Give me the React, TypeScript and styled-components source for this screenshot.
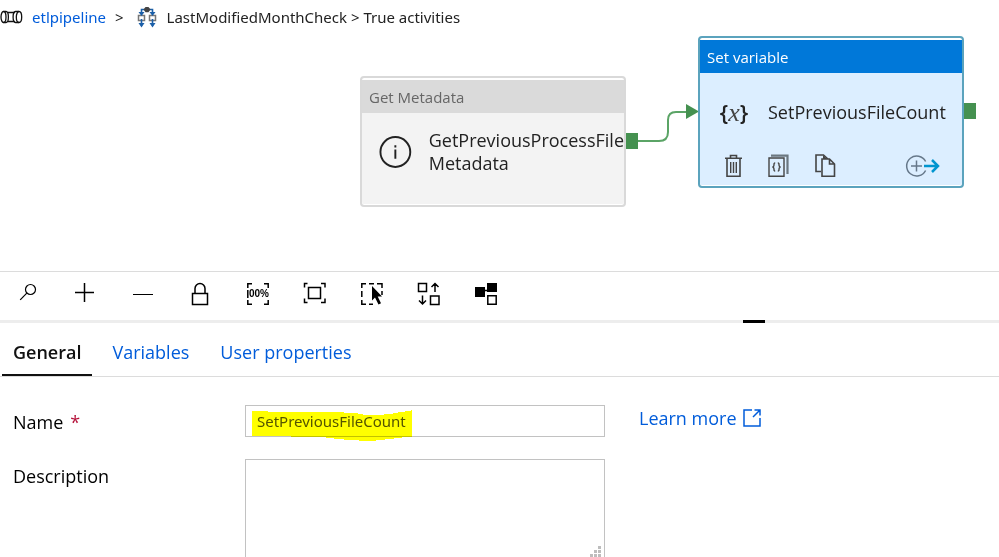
import React from "react";
import styled, { createGlobalStyle } from "styled-components";

const GlobalStyle = createGlobalStyle`
  * { box-sizing: border-box; }
  body {
    margin: 0;
    background: #fff;
    color: #111;
    font-family: "Open Sans", "Noto Sans", sans-serif;
    overflow: hidden;
  }
  button, input, textarea { font: inherit; color: inherit; }
`;

const Page = styled.div`
  display: flex;
  flex-direction: column;
  height: 100vh;
  overflow: hidden;
`;

const Breadcrumb = styled.nav`
  display: flex;
  align-items: center;
  height: 36px;
  padding-bottom: 2px;
  flex: none;
  font-family: "Noto Sans", "Open Sans", sans-serif;
  font-size: 15px;
  line-height: 20px;
  color: #222;
  white-space: nowrap;
`;

const CrumbLink = styled.a`
  margin: 0 9px;
  color: #015cda;
  text-decoration: none;
`;

const CrumbText = styled.span`
  margin-left: 10px;
`;

const Separator = styled.span`
  margin-right: 13px;
`;

const Canvas = styled.section`
  position: relative;
  flex: none;
  height: 235px;
`;

const Wire = styled.svg`
  position: absolute;
  left: 637px;
  top: 66px;
`;

const Node = styled.article<{ $x: number; $y: number; $selected?: boolean }>`
  position: absolute;
  left: ${(p) => p.$x}px;
  top: ${(p) => p.$y}px;
  display: flex;
  flex-direction: column;
  width: 266px;
  height: ${(p) => (p.$selected ? 152 : 131)}px;
  padding-top: 2px;
  border: 2px solid ${(p) => (p.$selected ? "#5ba3bd" : "#d9d9d9")};
  border-radius: 4px;
  background: ${(p) => (p.$selected ? "#dceeff" : "#f3f3f3")};
  box-shadow: inset 0 2px #fff, inset 0 -1px #fff;
`;

const NodeHeader = styled.header<{ $selected?: boolean }>`
  flex: none;
  height: 33px;
  padding: 0 7px;
  font-size: 15px;
  line-height: 34px;
  color: ${(p) => (p.$selected ? "#fff" : "#666")};
  background: ${(p) => (p.$selected ? "#0078d9" : "#dadada")};
`;

const NodeBody = styled.div`
  display: flex;
  flex: none;
  align-items: center;
  gap: 17px;
  height: 78px;
  padding-left: 17px;
  color: #222;
`;

const NodeName = styled.h2`
  margin: 0;
  font-size: 18px;
  line-height: 23px;
  font-weight: 400;
  white-space: nowrap;
`;

const Port = styled.span<{ $y: number }>`
  position: absolute;
  right: -14px;
  top: ${(p) => p.$y}px;
  width: 12px;
  height: 16px;
  background: #459150;
`;

const NodeActions = styled.div`
  display: flex;
  align-items: center;
  gap: 24px;
  padding: 3px 22px 0 24px;
`;

const IconButton = styled.button<{ $end?: boolean }>`
  display: flex;
  flex: none;
  padding: 0;
  border: 0;
  background: none;
  color: #444;
  cursor: pointer;
  margin-left: ${(p) => (p.$end ? "auto" : "0")};
`;

const Toolbar = styled.div`
  display: flex;
  flex: none;
  height: 49px;
  border-top: 1px solid #dcdcdc;
`;

const ToolButton = styled.button`
  display: flex;
  align-items: center;
  justify-content: center;
  width: 57px;
  padding: 0 0 3px;
  border: 0;
  background: none;
  color: #000;
  cursor: pointer;
`;

const Splitter = styled.div`
  display: flex;
  flex: none;
  justify-content: flex-end;
  height: 3px;
  padding-right: 234px;
  background: #ededed;
`;

const SplitterHandle = styled.span`
  width: 22px;
  background: #000;
`;

const Tabs = styled.div`
  display: flex;
  flex: none;
  gap: 9px;
  height: 54px;
  padding-left: 2px;
  border-bottom: 1px solid #dcdcdc;
`;

const Tab = styled.button<{ $active?: boolean }>`
  padding: 7px 11px 0;
  border: 0;
  border-bottom: 2px solid ${(p) => (p.$active ? "#111" : "transparent")};
  background: none;
  font-size: 18px;
  line-height: 24px;
  font-weight: ${(p) => (p.$active ? 600 : 400)};
  color: ${(p) => (p.$active ? "#111" : "#015cda")};
  cursor: pointer;
`;

const Form = styled.form`
  display: grid;
  grid-template-columns: 232px minmax(200px, 360px) auto;
  justify-content: start;
  align-items: start;
  row-gap: 22px;
  padding: 28px 13px 0;
  font-size: 18px;
  line-height: 24px;
`;

const Label = styled.label`
  padding-top: 5px;
  color: #000;
`;

const Required = styled.span`
  margin-left: 7px;
  color: #b5123a;
`;

const Field = styled.div`
  position: relative;
  display: flex;
`;

const TextInput = styled.input`
  width: 100%;
  height: 32px;
  padding: 0 11px;
  border: 1px solid #c2c2c2;
  border-radius: 0;
  font-family: "Noto Sans", "Open Sans", sans-serif;
  font-size: 15px;
  color: #555;
  outline: none;
`;

const TextArea = styled.textarea`
  width: 100%;
  height: 102px;
  padding: 8px 11px;
  border: 1px solid #c2c2c2;
  font-size: 15px;
  resize: none;
  outline: none;
`;

const Marker = styled.svg`
  position: absolute;
  left: 7px;
  top: 5px;
  mix-blend-mode: multiply;
  pointer-events: none;
`;

const Grip = styled.svg`
  position: absolute;
  right: 4px;
  bottom: 4px;
  pointer-events: none;
`;

const LearnMore = styled.a`
  display: flex;
  align-items: center;
  gap: 6px;
  margin-left: 34px;
  padding-top: 1px;
  color: #015cda;
  text-decoration: none;
  white-space: nowrap;
`;

const PipelineIcon = () => (
  <svg width="23" height="16" viewBox="0 0 23 16" fill="none" stroke="#111" strokeWidth="1.3" aria-hidden="true">
    <ellipse cx="3.500" cy="8" rx="2.500" ry="5.500" />
    <path d="M3.500 2.500h2.500c3.200 0 3.200 11 0 11H3.500" />
    <path d="M8 3.500h7M8 12.500h7" />
    <path d="M19 2.500h-3.500c-3.200 0-3.200 11 0 11H19" />
    <ellipse cx="19" cy="8" rx="2.700" ry="5.500" />
  </svg>
);

const ConditionIcon = () => (
  <svg width="20" height="22" viewBox="0 0 20 22" fill="none" aria-hidden="true">
    <path d="M1.500 9.500h6v5h-6zM12.500 9.500h6v5h-6z" fill="#fff" stroke="#777" strokeWidth="1.500" />
    <path d="M4.500 7V3.500h11V7M4.500 13v5M15.500 13v5" stroke="#1b5fa8" strokeWidth="1.600" />
    <path d="M1.500 6h6l-3 4zM12.500 6h6l-3 4zM1.500 17h6l-3 4.500zM12.500 17h6l-3 4.500z" fill="#1b5fa8" />
    <path d="M8.500 1h3L13.500 3.500 11.500 6.200h-3L6.500 3.500z" fill="#444" />
  </svg>
);

const InfoIcon = () => (
  <svg width="34" height="34" viewBox="0 0 34 34" fill="none" stroke="#222" strokeWidth="2" aria-hidden="true">
    <circle cx="17" cy="17" r="15.500" />
    <path d="M17 14.500v9.500M17 10v2.400" />
  </svg>
);

const VariableMark = styled.span`
  flex: none;
  width: 34px;
  text-align: center;
  white-space: nowrap;
  font-size: 22px;
  line-height: 24px;
  font-weight: 600;
  color: #222;

  i {
    font-family: "Liberation Serif", serif;
    font-size: 26px;
    font-weight: 400;
    color: #444;
  }
`;

const TrashIcon = () => (
  <svg width="20" height="24" viewBox="0 0 20 24" fill="none" stroke="currentColor" strokeWidth="1.600" aria-hidden="true">
    <path d="M1 4.200h17M6.500 4V1.500h6V4M3 4.500v17.800h13V4.500" />
    <path d="M6.700 8v11M9.500 8v11M12.300 8v11" strokeWidth="1.400" />
  </svg>
);

const CodeIcon = () => (
  <svg width="23" height="24" viewBox="0 0 23 24" fill="none" stroke="currentColor" strokeWidth="1.400" aria-hidden="true">
    <path d="M1 4h15v18.300H1z" />
    <path d="M3 1.700h16.500V20" strokeWidth="2.200" stroke="#6b7780" />
    <path d="M7.200 9c-1.400 0-1.200 1-1.200 2s-.6 1.800-1.500 2c.9.200 1.500 1 1.500 2s-.2 2 1.200 2M9.800 9c1.400 0 1.200 1 1.200 2s.6 1.800 1.500 2c-.9.200-1.500 1-1.500 2s.2 2-1.200 2" />
  </svg>
);

const CopyIcon = () => (
  <svg width="23" height="24" viewBox="0 0 23 24" fill="none" stroke="currentColor" strokeWidth="1.600" aria-hidden="true">
    <path d="M6 17.500H1V1h7.500L13 5" />
    <path d="M7 5h7.500l5 5v12.300H7zM14.500 5v5h5" fill="#dceeff" />
    <path d="M8 1v4h4z" fill="currentColor" stroke="none" />
  </svg>
);

const AddOutputIcon = () => (
  <svg width="35" height="24" viewBox="0 0 35 24" fill="none" aria-hidden="true">
    <path d="M20.600 7.500a10 10 0 1 0 0 9M11.500 6.500v11M6 12h11" stroke="#66788a" strokeWidth="1.500" />
    <path d="M19 12h14M27 6l6 6-6 6" stroke="#0095cf" strokeWidth="2.500" />
  </svg>
);

type ToolProps = { children: React.ReactNode };
const ToolSvg = ({ children }: ToolProps) => (
  <svg width="25" height="25" viewBox="0 0 25 25" fill="none" stroke="currentColor" strokeWidth="1.500" aria-hidden="true">
    {children}
  </svg>
);

const tools: { label: string; icon: React.ReactNode }[] = [
  {
    label: "Search",
    icon: (
      <g strokeWidth="1.200">
        <circle cx="14.500" cy="7.500" r="5" />
        <path d="M10.800 11.200L4.200 17.800" />
      </g>
    ),
  },
  { label: "Zoom in", icon: <path d="M2 10.500h19M11.500 1v19" /> },
  { label: "Zoom out", icon: <path d="M3 12.500h20" strokeWidth="1" /> },
  {
    label: "Lock canvas",
    icon: <path d="M5.500 11.500h15v11h-15zM8 11.500V6.500a5 5 0 0 1 10 0v5" />,
  },
  {
    label: "Zoom to 100%",
    icon: (
      <>
        <path d="M3.800 6V1.800H8M20 1.800h4.200V6M3.800 18v4.200H8M20 22.200h4.200V18M3.800 8v8" />
        <text x="5" y="15" fontFamily="Liberation Sans, sans-serif" fontSize="10" fontWeight="700" fill="currentColor" stroke="none">
          00%
        </text>
      </>
    ),
  },
  {
    label: "Zoom to fit",
    icon: <path d="M3.500 5.500v-4h3M20 1.500h4v4M3.500 16.500v4h3M20 20.500h4v-4M7.500 5.500h12v11h-12z" />,
  },
  {
    label: "Select",
    icon: (
      <>
        <path d="M3.800 6V1.800H8M11 1.800h5M19 1.800h5V6M3.800 9v6M3.800 18v4.200H8M11 22.200h4M24 9v4" />
        <path d="M14 4v14.500l3-3 3.500 7 2.500-1.300-3.300-6.700H24z" fill="currentColor" stroke="none" />
      </>
    ),
  },
  {
    label: "Auto align",
    icon: (
      <path d="M3.500 1.500h8v8h-8zM15.500 14h8.500v8.500h-8.500zM20 10V1.800M16.500 5L20 1.500 23.500 5M7.500 13.500v8.500M4 18.500L7.500 22l3.500-3.500" />
    ),
  },
  {
    label: "Show lineage",
    icon: (
      <>
        <path d="M3 5h10v10H3zM15 1h10v9H15z" fill="currentColor" stroke="none" />
        <path d="M12 8.500h5M15.800 13.800h8.400v8.400h-8.400z" />
      </>
    ),
  },
];

export default function App() {
  return (
    <>
      <GlobalStyle />
      <Page>
        <Breadcrumb aria-label="Breadcrumb">
          <PipelineIcon />
          <CrumbLink href="#etlpipeline">etlpipeline</CrumbLink>
          <Separator>&gt;</Separator>
          <ConditionIcon />
          <CrumbText>LastModifiedMonthCheck &gt; True activities</CrumbText>
        </Breadcrumb>

        <Canvas aria-label="Pipeline canvas">
          <Wire width="62" height="50" viewBox="0 0 62 50" fill="none" aria-hidden="true">
            <path d="M0 39h22q9 0 9-9V18q0-8 8-8h12" stroke="#5ba466" strokeWidth="2" />
            <path d="M49 2l13 7.500L49 17z" fill="#459150" />
          </Wire>
          <Node $x={360} $y={40}>
            <NodeHeader>Get Metadata</NodeHeader>
            <NodeBody>
              <InfoIcon />
              <NodeName>
                GetPreviousProcessFile
                <br />
                Metadata
              </NodeName>
            </NodeBody>
            <Port $y={55} />
          </Node>
          <Node $x={698} $y={0} $selected>
            <NodeHeader $selected>Set variable</NodeHeader>
            <NodeBody>
              <VariableMark>
                {"{"}
                <i>x</i>
                {"}"}
              </VariableMark>
              <NodeName>SetPreviousFileCount</NodeName>
            </NodeBody>
            <NodeActions>
              <IconButton type="button" aria-label="Delete">
                <TrashIcon />
              </IconButton>
              <IconButton type="button" aria-label="View code">
                <CodeIcon />
              </IconButton>
              <IconButton type="button" aria-label="Clone">
                <CopyIcon />
              </IconButton>
              <IconButton type="button" aria-label="Add output" $end>
                <AddOutputIcon />
              </IconButton>
            </NodeActions>
            <Port $y={65} />
          </Node>
        </Canvas>

        <Toolbar role="toolbar" aria-label="Canvas tools">
          {tools.map((tool) => (
            <ToolButton key={tool.label} type="button" aria-label={tool.label}>
              <ToolSvg>{tool.icon}</ToolSvg>
            </ToolButton>
          ))}
        </Toolbar>
        <Splitter>
          <SplitterHandle />
        </Splitter>

        <Tabs role="tablist">
          <Tab type="button" role="tab" aria-selected="true" $active>
            General
          </Tab>
          <Tab type="button" role="tab" aria-selected="false">
            Variables
          </Tab>
          <Tab type="button" role="tab" aria-selected="false">
            User properties
          </Tab>
        </Tabs>

        <Form>
          <Label htmlFor="name">
            Name<Required>*</Required>
          </Label>
          <Field>
            <TextInput id="name" type="text" defaultValue="SetPreviousFileCount" />
            <Marker width="160" height="32" viewBox="0 0 160 32" aria-hidden="true">
              <path
                d="M0 1h16v1h76v1h14v1h5v1h21V4h9V3h5V2h7V1h6V0h1v27h-10v1h-8v1h-9v1h-9v1h-17v-1h-15v-1h-10v-1h-8v-1h-4v-1H79v1H39v-1H0z"
                fill="#ffff00"
              />
            </Marker>
          </Field>
          <LearnMore href="#learn-more">
            Learn more
            <svg width="18" height="18" viewBox="0 0 18 18" fill="none" stroke="currentColor" strokeWidth="1.500" aria-hidden="true">
              <path d="M9 1H1v16h16V9M10 8l7-7M11.500 1H17v5.500" />
            </svg>
          </LearnMore>

          <Label htmlFor="description">Description</Label>
          <Field>
            <TextArea id="description" />
            <Grip width="11" height="11" viewBox="0 0 11 11" fill="#bdbdbd" aria-hidden="true">
              <path d="M8 0h3v3H8zM4 4h3v3H4zM8 4h3v3H8zM0 8h3v3H0zM4 8h3v3H4zM8 8h3v3H8z" />
            </Grip>
          </Field>
        </Form>
      </Page>
    </>
  );
}
